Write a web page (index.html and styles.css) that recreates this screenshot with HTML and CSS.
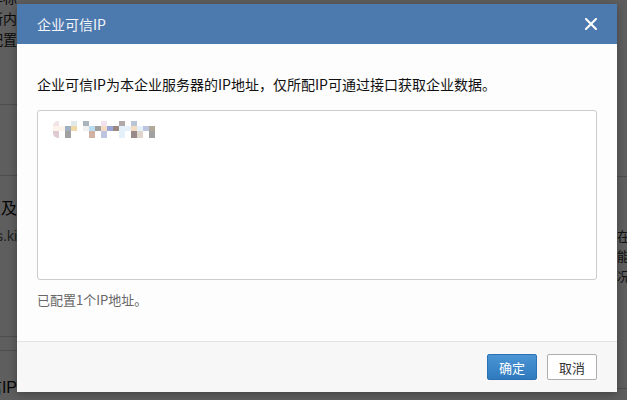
FILE: index.html
```html
<!DOCTYPE html>
<html lang="zh-CN">
<head>
    <meta charset="UTF-8">
    <meta name="viewport" content="width=device-width, initial-scale=1.0">
    <title>企业可信IP</title>
    <link rel="stylesheet" href="styles.css">
</head>
<body>
    <div class="page">
        <div class="side side-left">
            <div class="bg-line top">展示 从而提高转化率标</div>
            <div class="bg-line">新内</div>
            <div class="bg-line">配置</div>
            <div class="bg-rule r1"></div>
            <div class="bg-rule r2"></div>
            <div class="bg-title">双及</div>
            <div class="bg-link">docs.ki</div>
            <div class="bg-rule r3"></div>
            <div class="bg-rule r4"></div>
            <div class="bg-title last">信IP</div>
        </div>
        <div class="page-main"></div>
        <div class="side side-right">
            <div class="bg-rule r5"></div>
            <div class="bg-text first">在</div>
            <div class="bg-text">能</div>
            <div class="bg-text">况</div>
            <div class="bg-rule r6"></div>
        </div>
    </div>

    <div class="mask"></div>

    <div class="modal">
        <div class="modal-header">
            <span class="modal-title">企业可信IP</span>
            <span class="modal-close">
                <svg width="12" height="12" viewBox="0 0 12 12">
                    <path d="M1 1 L11 11 M11 1 L1 11" stroke="#fff" stroke-width="2" stroke-linecap="square"/>
                </svg>
            </span>
        </div>
        <div class="modal-body">
            <p class="desc">企业可信IP为本企业服务器的IP地址，仅所配IP可通过接口获取企业数据。</p>
            <div class="ip-box">
                <div class="mosaic">
                    <span class="m-pink"></span><span></span><span></span><span class="m-mist"></span><span></span><span class="m-slate"></span><span></span><span></span><span class="m-rose"></span><span></span><span></span><span class="m-taupe"></span><span></span><span class="m-steel"></span><span></span><span></span><span></span>
                    <span class="m-cream"></span><span class="m-cream"></span><span class="m-blue"></span><span class="m-sand"></span><span></span><span class="m-paper"></span><span class="m-sky"></span><span class="m-gray"></span><span class="m-peach"></span><span class="m-lav"></span><span class="m-brown"></span><span class="m-ice"></span><span class="m-ice"></span><span class="m-peach"></span><span class="m-ice"></span><span class="m-lav2"></span><span class="m-khaki"></span>
                    <span class="m-rose2"></span><span></span><span class="m-gray"></span><span></span><span></span><span></span><span class="m-clay"></span><span></span><span class="m-lav2"></span><span></span><span></span><span class="m-ice"></span><span></span><span class="m-mauve"></span><span class="m-stone"></span><span></span><span class="m-gray"></span>
                </div>
            </div>
            <p class="count">已配置1个IP地址。</p>
        </div>
        <div class="modal-footer">
            <button class="btn btn-primary">确定</button>
            <button class="btn">取消</button>
        </div>
    </div>
</body>
</html>
```

FILE: styles.css
```css
* {
    box-sizing: border-box;
}

body {
    margin: 0;
    width: 627px;
    height: 400px;
    overflow: hidden;
    position: relative;
    background-color: #fff;
    font-family: "Liberation Sans", "Noto Sans CJK SC", sans-serif;
    color: #333;
}

/* page behind the dialog */
.page {
    display: flex;
    height: 400px;
}

.side {
    display: flex;
    flex-direction: column;
    overflow: hidden;
    white-space: nowrap;
}

.side-left {
    width: 17px;
    align-items: flex-end;
}

.page-main {
    flex: 1;
}

.side-right {
    width: 10px;
}

.bg-line {
    font-size: 14px;
    line-height: 21px;
    color: #222;
}

.bg-line.top {
    margin-top: -12px;
}

.bg-rule {
    height: 1px;
    width: 200px;
    background-color: #d0d0d0;
}

.r1 {
    margin-top: 53px;
}

.r2 {
    margin-top: 70px;
}

.bg-title {
    margin-top: 22px;
    font-size: 16px;
    line-height: 24px;
    color: #111;
}

.bg-link {
    margin-top: 6px;
    font-size: 14px;
    line-height: 18px;
    color: #555;
}

.r3 {
    margin-top: 91px;
}

.r4 {
    margin-top: 13px;
}

.bg-title.last {
    margin-top: 26px;
}

.r5 {
    margin-top: 176px;
}

.bg-text {
    font-size: 13px;
    line-height: 20px;
    color: #333;
}

.bg-text.first {
    margin-top: 50px;
}

.r6 {
    margin-top: 101px;
}

/* dialog */
.mask {
    position: absolute;
    inset: 0;
    background-color: rgba(0, 0, 0, 0.63);
}

.modal {
    position: absolute;
    left: 17px;
    top: 4px;
    width: 600px;
    height: 388px;
    display: flex;
    flex-direction: column;
    background-color: #fdfdfd;
    box-shadow: 0 2px 8px rgba(0, 0, 0, 0.3);
    font-family: "Noto Sans CJK SC", "Liberation Sans", sans-serif;
}

.modal-header {
    height: 40px;
    padding: 0 20px;
    display: flex;
    align-items: center;
    justify-content: space-between;
    background-color: #4d7aae;
}

.modal-title {
    font-size: 14px;
    color: #f2f5f9;
}

.modal-close {
    display: flex;
    width: 12px;
    height: 12px;
}

.modal-body {
    flex: 1;
    padding: 30px 20px 0;
}

.desc {
    margin: 0;
    font-size: 14px;
    line-height: 20px;
    color: #111;
}

.ip-box {
    margin-top: 16px;
    height: 170px;
    padding: 10px 15px;
    border: 1px solid #ccc;
    border-radius: 3px;
    background-color: #fff;
}

.mosaic {
    display: grid;
    grid-template-columns: repeat(17, 6px);
    grid-template-rows: 5px 5px 7px;
}

.m-pink { background-color: #f2e4e6; border-top-left-radius: 5px; }
.m-rose2 { background-color: #e0cad2; border-bottom-left-radius: 5px; }
.m-cream { background-color: #fdf3ea; }
.m-mist { background-color: #e0e8ea; }
.m-slate { background-color: #a9b4bc; }
.m-rose { background-color: #f1e2ed; }
.m-taupe { background-color: #b1a9a9; }
.m-steel { background-color: #b9c5d5; }
.m-blue { background-color: #9fb1c1; }
.m-sand { background-color: #f0d8a8; }
.m-paper { background-color: #f0f0f0; }
.m-sky { background-color: #b9dcf0; }
.m-gray { background-color: #a1a1a1; }
.m-peach { background-color: #f4dcc4; }
.m-lav { background-color: #99a5d5; }
.m-brown { background-color: #988880; }
.m-ice { background-color: #e4f1fb; }
.m-lav2 { background-color: #bcc4e0; }
.m-khaki { background-color: #b0a898; }
.m-clay { background-color: #d1b1a1; }
.m-mauve { background-color: #998989; }
.m-stone { background-color: #e0d5cd; }

.count {
    margin: 10px 0 0;
    font-size: 13px;
    line-height: 20px;
    color: #666;
}

.modal-footer {
    height: 51px;
    padding: 12px 20px 0;
    display: flex;
    justify-content: flex-end;
    gap: 10px;
    border-top: 1px solid #e3e3e3;
    background-color: #f7f7f7;
}

.btn {
    width: 50px;
    height: 26px;
    padding: 0;
    font-family: "Noto Sans CJK SC", sans-serif;
    font-size: 13px;
    color: #333;
    background-color: #fff;
    border: 1px solid #adadad;
    border-radius: 2px;
    cursor: pointer;
}

.btn-primary {
    color: #fff;
    background: linear-gradient(#4b95d5, #2f7abd);
    border-color: #2c71b3;
}
```
